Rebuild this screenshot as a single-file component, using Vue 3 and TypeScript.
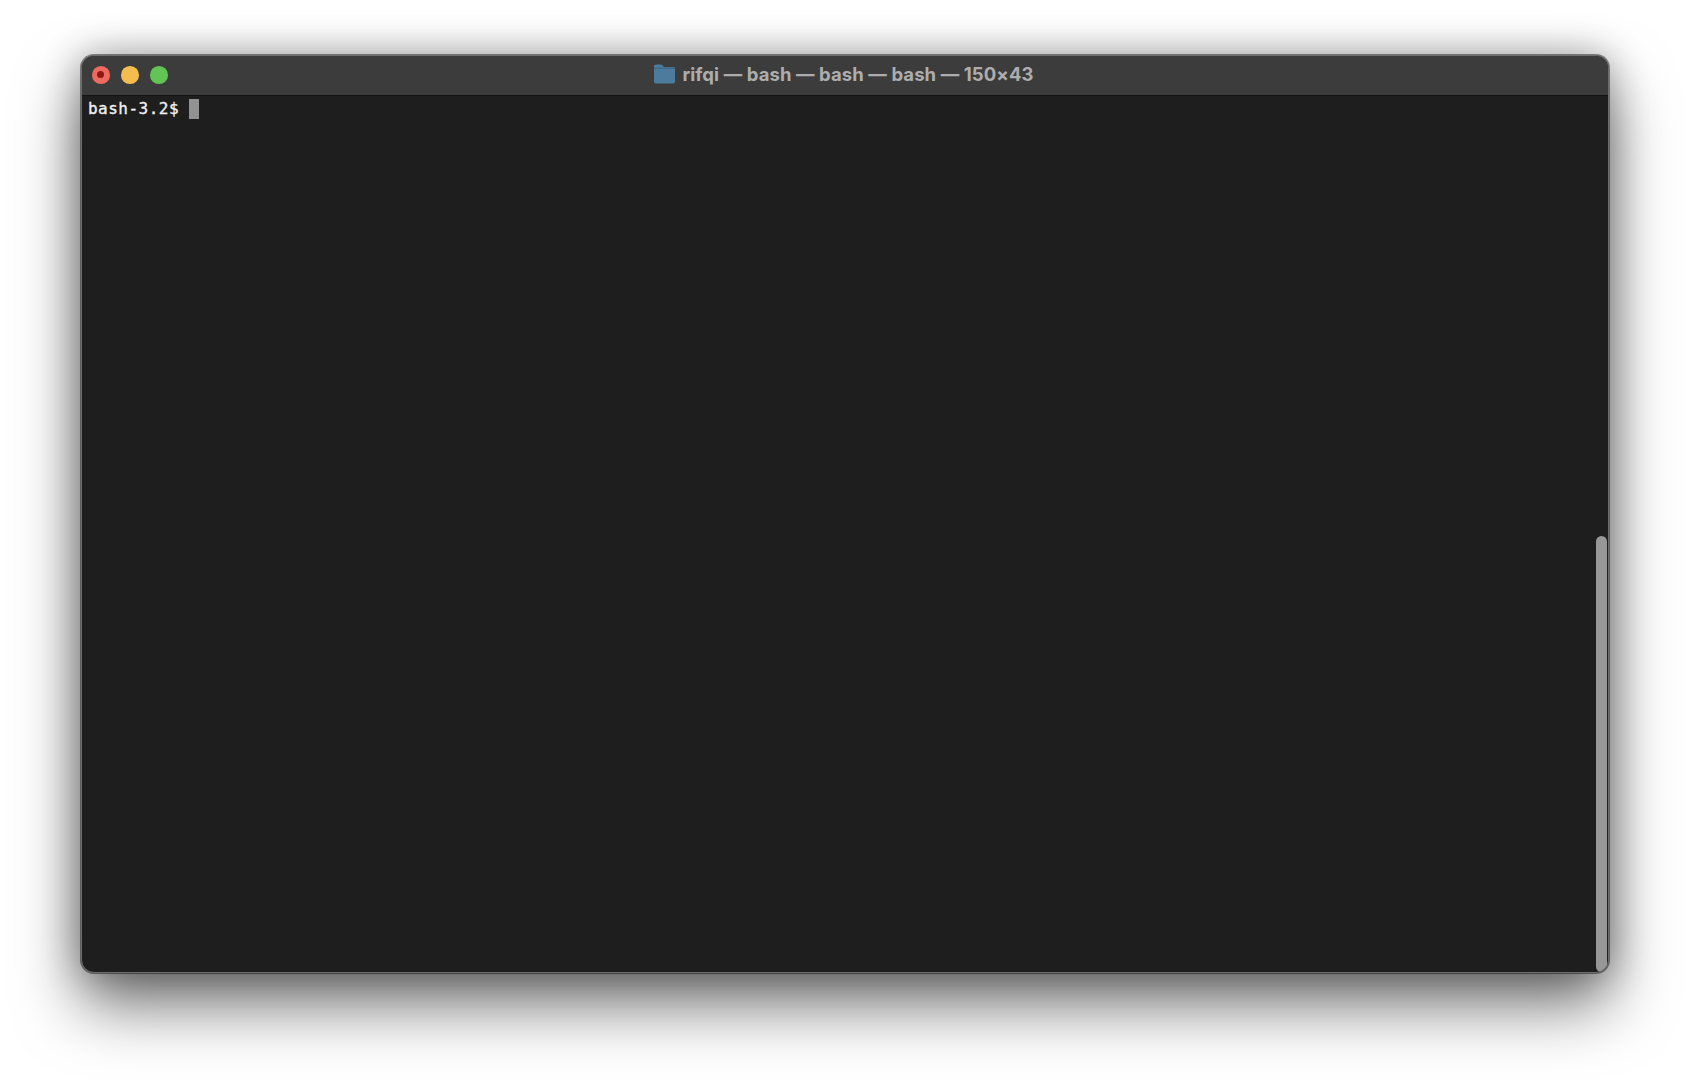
<script setup lang="ts">
const title: string = 'rifqi — bash — bash — bash — 150×43'
const prompt: string = 'bash-3.2$'
</script>

<template>
  <div class="page">
    <div class="window">
      <header class="titlebar">
        <div class="lights">
          <span class="light red"><i class="dot"></i></span>
          <span class="light yellow"></span>
          <span class="light green"></span>
        </div>
        <div class="title">
          <svg class="folder" width="21" height="20" viewBox="0 0 21 20" aria-hidden="true">
            <path d="M0 2.4C0 1.2.9.5 2 .5h4.8c.7 0 1.2.2 1.6.7L10 3h9c1.2 0 2 .8 2 2v12.4c0 1.2-.9 2.1-2.1 2.1H2.1C.9 19.5 0 18.6 0 17.4Z" fill="#4d7b9b" />
            <path d="M0 3.4h21v1.6H0Z" fill="#3f6a88" />
          </svg>
          <span>{{ title }}</span>
        </div>
      </header>
      <main class="terminal">
        <div class="line">
          <span class="prompt">{{ prompt }}</span>
          <span class="cursor"></span>
        </div>
        <div class="scrollbar"><div class="thumb"></div></div>
      </main>
    </div>
  </div>
</template>

<style>
html, body { margin: 0; background: #ffffff; }
</style>

<style scoped>
.page {
  width: 1690px;
  height: 1080px;
  box-sizing: border-box;
  padding: 55px 81px 107px;
  background: #fff;
  overflow: hidden;
}
.window {
  height: 918px;
  box-sizing: border-box;
  display: flex;
  flex-direction: column;
  border-radius: 13px;
  overflow: hidden;
  background: #1e1e1e;
  border: 1px solid #6e6e6e;
  box-shadow: 0 0 0 1px rgba(0, 0, 0, 0.42), 0 32px 64px rgba(0, 0, 0, 0.55), 0 0 38px rgba(0, 0, 0, 0.32);
}
.titlebar {
  height: 39px;
  flex: none;
  box-sizing: content-box;
  position: relative;
  display: flex;
  align-items: center;
  justify-content: center;
  background: #3c3c3c;
  border-bottom: 1px solid #141414;
}
.lights {
  position: absolute;
  left: 9.75px;
  top: 10px;
  display: flex;
  gap: 11.25px;
}
.light {
  width: 17.75px;
  height: 17.75px;
  border-radius: 50%;
  display: flex;
  align-items: center;
  justify-content: center;
}
.red { background: #ee6a5e; }
.yellow { background: #f5bd4f; }
.green { background: #61c454; }
.dot {
  width: 7px;
  height: 7px;
  border-radius: 50%;
  background: #8d1a12;
}
.title {
  display: flex;
  align-items: center;
  gap: 7px;
  margin-top: -4px;
  margin-right: 2px;
  font-family: Inter, "Liberation Sans", sans-serif;
  font-size: 18.5px;
  font-weight: 700;
  letter-spacing: 0.09px;
  color: #adadad;
  white-space: nowrap;
}
.folder { display: block; }
.terminal {
  flex: 1;
  position: relative;
  padding: 3px 6px;
}
.line {
  display: flex;
  align-items: center;
  height: 20px;
}
.prompt {
  font-family: "DejaVu Sans Mono", "Liberation Mono", monospace;
  font-size: 16px;
  line-height: 18px;
  letter-spacing: 0.48px;
  -webkit-text-stroke: 0.35px #f0f0f0;
  color: #f0f0f0;
  white-space: pre;
}
.cursor {
  width: 10px;
  height: 20px;
  margin-left: 10px;
  background: #929292;
}
.scrollbar {
  position: absolute;
  right: 0;
  top: 0;
  bottom: 0;
  width: 14px;
}
.thumb {
  position: absolute;
  right: 1px;
  top: 440px;
  bottom: 0;
  width: 11px;
  border-radius: 5.5px;
  background: #979797;
}
</style>
